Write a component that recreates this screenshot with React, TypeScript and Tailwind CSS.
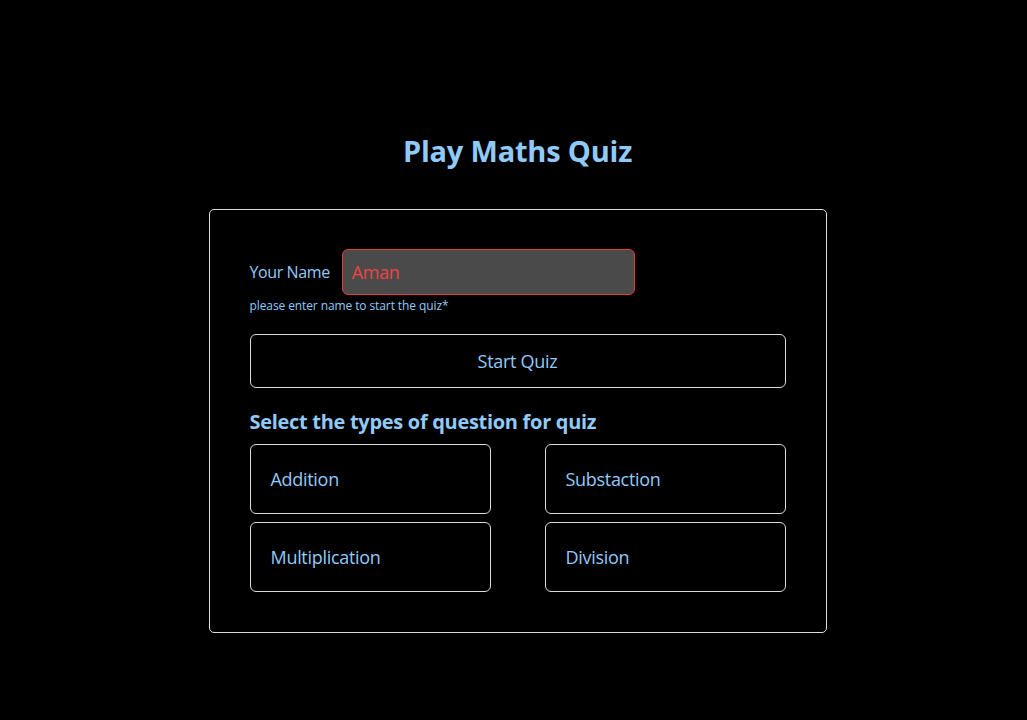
export default function App() {
  return (
    <div className="min-h-screen w-full bg-black flex flex-col items-center pt-[132px] pl-[8px]" style={{ fontFamily: '"Open Sans", "Noto Sans", sans-serif' }}>
      <h1 className="text-[29px] leading-[38px] font-bold text-[#90caf9] tracking-[-0.2px]">Play Maths Quiz</h1>
      <div className="mt-[39px] w-[618px] border border-[#dcdcdc] rounded-[5px] p-10 flex flex-col">
        <div className="flex items-center gap-[12px] -mt-px">
          <span className="text-[16px] text-[#90caf9] tracking-[-0.4px]">Your Name</span>
          <div className="w-[293px] h-[46px] bg-[#4a4a4a] border border-[#e53935] rounded-[6px] flex items-center px-[9px]">
            <span className="text-[18px] text-[#ef4444] tracking-[-0.3px]">Aman</span>
          </div>
        </div>
        <div className="mt-[3px] text-[12px] leading-[16px] text-[#90caf9] tracking-[-0.1px]">please enter name to start the quiz*</div>
        <button className="mt-[20px] h-[54px] w-full border border-[#dcdcdc] rounded-[6px] text-[18px] text-[#90caf9] tracking-[-0.3px]">Start Quiz</button>
        <h2 className="mt-[20px] text-[20px] leading-[28px] font-bold text-[#90caf9] tracking-[-0.3px]">Select the types of question for quiz</h2>
        <div className="mt-[8px] grid grid-cols-2 gap-x-[54px] gap-y-[8px]">
          {["Addition", "Substaction", "Multiplication", "Division"].map((t) => (
            <div key={t} className="h-[70px] border border-[#dcdcdc] rounded-[6px] flex items-center px-[20px] text-[18px] text-[#90caf9] tracking-[-0.3px]">
              {t}
            </div>
          ))}
        </div>
      </div>
    </div>
  );
}
